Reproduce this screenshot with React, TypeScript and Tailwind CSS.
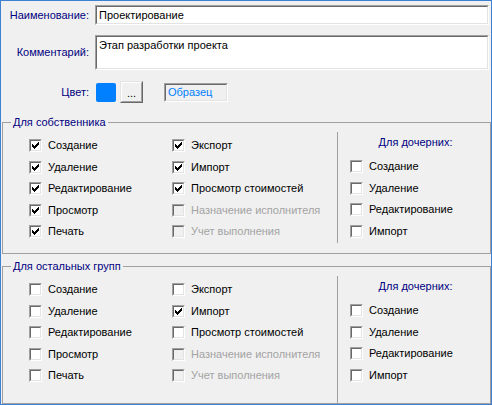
import React from "react";

type Item = { label: string; checked?: boolean; disabled?: boolean };

function CheckMark() {
  const cols = [2, 3, 4, 3, 2, 1, 0];
  return (
    <svg width="9" height="9" viewBox="0 0 9 9" shapeRendering="crispEdges" className="block">
      {cols.map((y, i) => (
        <rect key={i} x={i + 1} y={y + 1} width="1" height="3" fill="#000" />
      ))}
    </svg>
  );
}

function Check({ item }: { item: Item }) {
  return (
    <div className="flex items-center h-[21.5px] gap-[6px] whitespace-nowrap">
      <span className="block w-[13px] h-[13px] shrink-0 border border-t-[#a0a0a0] border-l-[#a0a0a0] border-b-white border-r-white">
        <span
          className={
            "block w-full h-full border border-t-[#696969] border-l-[#696969] border-b-[#e3e3e3] border-r-[#e3e3e3] " +
            (item.disabled ? "bg-[#f0f0f0]" : "bg-white")
          }
        >
          {item.checked ? <CheckMark /> : null}
        </span>
      </span>
      <span className={item.disabled ? "text-[#a3a3a3]" : "text-black"}>{item.label}</span>
    </div>
  );
}

function Sunken({ className, children, bg }: { className: string; children?: React.ReactNode; bg: string }) {
  return (
    <div className={"border border-t-[#a0a0a0] border-l-[#a0a0a0] border-b-white border-r-white " + className}>
      <div className={"w-full h-full border border-t-[#696969] border-l-[#696969] border-b-[#e3e3e3] border-r-[#e3e3e3] " + bg}>
        {children}
      </div>
    </div>
  );
}

function Group({
  title,
  col1,
  col2,
  right,
  className,
}: {
  title: string;
  col1: Item[];
  col2: Item[];
  right: Item[];
  className: string;
}) {
  return (
    <fieldset className={"ml-[1px] border border-[#a0a0a0] " + className}>
      <legend className="ml-[8px] px-[2px] text-[#000080] leading-[13px]">{title}</legend>
      <div className="flex h-full">
        <div className="w-[334px] pl-[26px] pt-[6px] flex">
          <div className="w-[143px] flex flex-col">
            {col1.map((it) => (
              <Check key={it.label} item={it} />
            ))}
          </div>
          <div className="flex flex-col">
            {col2.map((it) => (
              <Check key={it.label} item={it} />
            ))}
          </div>
        </div>
        <div className="flex-1 mt-[3px] border-l border-[#a0a0a0] flex flex-col">
          <div className="mt-[4px] h-[13px] text-center text-[#000080] pl-[3px]">Для дочерних:</div>
          <div className="mt-[7px] pl-[12px] flex flex-col">
            {right.map((it) => (
              <Check key={it.label} item={it} />
            ))}
          </div>
        </div>
      </div>
    </fieldset>
  );
}

export default function App() {
  const rightItems: Item[] = [
    { label: "Создание" },
    { label: "Удаление" },
    { label: "Редактирование" },
    { label: "Импорт" },
  ];
  return (
    <div className="w-[492px] h-[405px] bg-[#f0f0f0] border border-[#3f80d2] flex flex-col text-[11px] leading-[13px] text-black font-['Liberation_Sans',Arial,sans-serif] overflow-hidden">
      <div className="flex flex-col pt-[4px]">
        <div className="flex items-center">
          <div className="w-[88px] text-right text-[#000080]">Наименование:</div>
          <Sunken className="ml-[6px] w-[394px] h-[20px]" bg="bg-white">
            <div className="pl-[2px] pt-[1px] leading-[14px]">Проектирование</div>
          </Sunken>
        </div>
        <div className="flex items-center mt-[10px]">
          <div className="w-[88px] text-right text-[#000080]">Комментарий:</div>
          <Sunken className="ml-[6px] w-[394px] h-[35px]" bg="bg-white">
            <div className="pl-[2px] pt-[2px] leading-[13px]">Этап разработки проекта</div>
          </Sunken>
        </div>
        <div className="flex items-center mt-[11px] h-[22px]">
          <div className="w-[88px] text-right text-[#000080]">Цвет:</div>
          <div className="ml-[7px] w-[20px] h-[19px] rounded-[2px] bg-[#0080ff]" />
          <div className="ml-[4px] w-[23px] h-[22px] border border-t-[#e3e3e3] border-l-[#e3e3e3] border-b-[#696969] border-r-[#696969]">
            <div className="w-full h-full border border-t-white border-l-white border-b-[#a0a0a0] border-r-[#a0a0a0] flex items-end justify-center pb-[3px] leading-[10px]">
              ...
            </div>
          </div>
          <Sunken className="ml-[21px] w-[64px] h-[19px]" bg="bg-[#f0f0f0]">
            <div className="pl-[2px] pt-[1px] leading-[13px] text-[#0080ff]">Образец</div>
          </Sunken>
        </div>
      </div>
      <Group
        className="mt-[13px] h-[138px] shrink-0"
        title="Для собственника"
        col1={[
          { label: "Создание", checked: true },
          { label: "Удаление", checked: true },
          { label: "Редактирование", checked: true },
          { label: "Просмотр", checked: true },
          { label: "Печать", checked: true },
        ]}
        col2={[
          { label: "Экспорт", checked: true },
          { label: "Импорт", checked: true },
          { label: "Просмотр стоимостей", checked: true },
          { label: "Назначение исполнителя", disabled: true },
          { label: "Учет выполнения", disabled: true },
        ]}
        right={rightItems}
      />
      <Group
        className="mt-[6px] flex-1 min-h-0"
        title="Для остальных групп"
        col1={[
          { label: "Создание" },
          { label: "Удаление" },
          { label: "Редактирование" },
          { label: "Просмотр" },
          { label: "Печать" },
        ]}
        col2={[
          { label: "Экспорт" },
          { label: "Импорт", checked: true },
          { label: "Просмотр стоимостей" },
          { label: "Назначение исполнителя", disabled: true },
          { label: "Учет выполнения", disabled: true },
        ]}
        right={rightItems}
      />
    </div>
  );
}
